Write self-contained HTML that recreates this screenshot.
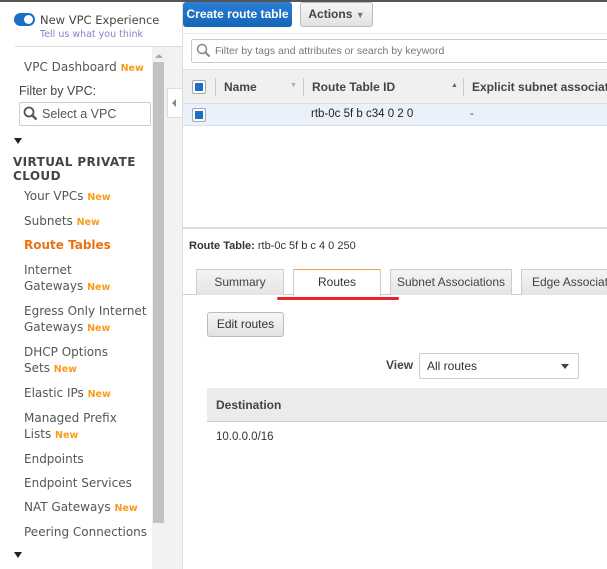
<!DOCTYPE html>
<html><head><style>
*{box-sizing:border-box;margin:0;padding:0}
body{width:607px;height:569px;overflow:hidden;background:#fff;font-family:"Liberation Sans",Arial,sans-serif;position:relative;font-size:12px;color:#333}
.a{position:absolute}
.nav{font-family:"DejaVu Sans",Verdana,sans-serif;font-size:12px;color:#555;left:24px;line-height:16px}
.new{color:#f89b1c;font-weight:bold;font-size:9.5px;font-family:"DejaVu Sans",sans-serif}
.btn{border:1px solid #bbb;border-radius:3px;background:linear-gradient(#f6f6f6,#e2e2e2);font-weight:bold;color:#444;text-align:center}
.tab{top:269px;height:26px;border:1px solid #ccc;border-bottom:none;background:linear-gradient(#f4f4f4,#e4e4e4);text-align:center;line-height:25px;color:#444;font-size:12px}
</style></head><body>
<div class="a" style="left:0;top:0;width:607px;height:2px;background:#555"></div>
<div class="a" style="left:14px;top:13px;width:21px;height:13px;border-radius:7px;background:#1a6fc9"></div>
<div class="a" style="left:24px;top:15px;width:9px;height:9px;border-radius:5px;background:#fff"></div>
<div class="a" style="left:40px;top:13px;font-family:'DejaVu Sans',sans-serif;font-size:11.5px;color:#444">New VPC Experience</div>
<div class="a" style="left:40px;top:29px;font-size:9.5px;color:#8a7fc7;font-family:'DejaVu Sans',sans-serif">Tell us what you think</div>
<div class="a" style="left:15px;top:46px;width:167px;height:1px;background:#ddd"></div>
<div class="a" style="left:152px;top:47px;width:13px;height:522px;background:#f1f1f1"></div>
<div class="a" style="left:153px;top:62px;width:11px;height:461px;background:#c1c1c1"></div>
<div class="a" style="left:155px;top:54px;width:0;height:0;border-left:4px solid transparent;border-right:4px solid transparent;border-bottom:4px solid #aaa"></div>
<div class="a" style="left:165px;top:47px;width:18px;height:522px;background:#f2f2f2"></div>
<div class="a" style="left:167px;top:88px;width:16px;height:30px;background:#fff;border:1px solid #ddd;border-right:none"></div>
<div class="a" style="left:172px;top:99px;border-top:4px solid transparent;border-bottom:4px solid transparent;border-right:4px solid #888"></div>
<div class="a nav" style="top:59px">VPC Dashboard <span class="new">New</span></div>
<div class="a" style="left:19px;top:84px;font-size:12.5px;color:#444">Filter by VPC:</div>
<div class="a" style="left:19px;top:102px;width:132px;height:24px;border:1px solid #ccc;border-radius:2px"></div>
<svg class="a" style="left:23px;top:106px" width="15" height="15"><circle cx="6" cy="6" r="4.5" fill="none" stroke="#555" stroke-width="1.8"/><line x1="9.5" y1="9.5" x2="13.5" y2="13.5" stroke="#555" stroke-width="2.4"/></svg>
<div class="a" style="left:42px;top:107px;font-size:12.5px;color:#555">Select a VPC</div>
<div class="a" style="left:14px;top:138px;border-left:4px solid transparent;border-right:4px solid transparent;border-top:6px solid #222"></div>
<div class="a" style="left:13px;top:155px;font-family:'DejaVu Sans',sans-serif;font-weight:bold;font-size:12px;color:#444;line-height:14px;letter-spacing:.4px">VIRTUAL PRIVATE<br>CLOUD</div>
<div class="a nav" style="top:188px">Your VPCs <span class="new">New</span></div>
<div class="a nav" style="top:213px">Subnets <span class="new">New</span></div>
<div class="a nav" style="top:237px;color:#ec7211;font-weight:bold">Route Tables</div>
<div class="a nav" style="top:262px">Internet<br>Gateways <span class="new">New</span></div>
<div class="a nav" style="top:303px">Egress Only Internet<br>Gateways <span class="new">New</span></div>
<div class="a nav" style="top:344px">DHCP Options<br>Sets <span class="new">New</span></div>
<div class="a nav" style="top:385px">Elastic IPs <span class="new">New</span></div>
<div class="a nav" style="top:410px">Managed Prefix<br>Lists <span class="new">New</span></div>
<div class="a nav" style="top:451px">Endpoints</div>
<div class="a nav" style="top:475px">Endpoint Services</div>
<div class="a nav" style="top:499px">NAT Gateways <span class="new">New</span></div>
<div class="a nav" style="top:524px">Peering Connections</div>
<div class="a" style="left:14px;top:552px;border-left:4px solid transparent;border-right:4px solid transparent;border-top:6px solid #222"></div>
<div class="a" style="left:182px;top:2px;width:1px;height:567px;background:#ddd"></div>
<div class="a" style="left:183px;top:2px;width:109px;height:25px;border-radius:3px;background:linear-gradient(#2b7fd3,#1566b8);color:#fff;font-weight:bold;font-size:12px;line-height:25px;text-align:center">Create route table</div>
<div class="a btn" style="left:300px;top:2px;width:73px;height:25px;line-height:23px;font-size:12px">Actions <span style="font-size:9px;color:#777">&#9660;</span></div>
<div class="a" style="left:183px;top:33px;width:424px;height:1px;background:#e8e8e8"></div>
<div class="a" style="left:191px;top:39px;width:420px;height:24px;border:1px solid #ccc;border-radius:2px;background:#fff"></div>
<svg class="a" style="left:196px;top:43px" width="15" height="15"><circle cx="6" cy="6" r="4.5" fill="none" stroke="#888" stroke-width="1.5"/><line x1="9.5" y1="9.5" x2="13.5" y2="13.5" stroke="#888" stroke-width="2"/></svg>
<div class="a" style="left:215px;top:45px;font-size:10.5px;color:#777">Filter by tags and attributes or search by keyword</div>
<div class="a" style="left:183px;top:69px;width:424px;height:35px;background:#f0f0f0;border-top:1px solid #ddd;border-bottom:1px solid #ddd"></div>
<div class="a" style="left:192px;top:80px;width:14px;height:14px;border:1px solid #aaa;border-radius:2px;background:#1a6fc9;box-shadow:inset 0 0 0 2px #fff"></div>
<div class="a" style="left:215px;top:78px;width:1px;height:18px;background:#ccc"></div>
<div class="a" style="left:224px;top:80px;font-weight:bold;font-size:12px;color:#444">Name</div>
<div class="a" style="left:290px;top:82px;font-size:7px;color:#aaa">&#9660;</div>
<div class="a" style="left:303px;top:78px;width:1px;height:18px;background:#ccc"></div>
<div class="a" style="left:312px;top:80px;font-weight:bold;font-size:12px;color:#444">Route Table ID</div>
<div class="a" style="left:451px;top:82px;font-size:7px;color:#666">&#9650;</div>
<div class="a" style="left:463px;top:78px;width:1px;height:18px;background:#ccc"></div>
<div class="a" style="left:472px;top:80px;font-weight:bold;font-size:12px;color:#444;white-space:nowrap">Explicit subnet associatio</div>
<div class="a" style="left:183px;top:104px;width:424px;height:22px;background:#eaf1fb;border-bottom:1px solid #dde"></div>
<div class="a" style="left:192px;top:108px;width:14px;height:14px;border:1px solid #aaa;border-radius:2px;background:#1a6fc9;box-shadow:inset 0 0 0 2px #fff"></div>
<div class="a" style="left:311px;top:108px;font-size:11.5px;color:#222">rtb-0c 5f b c34 0 2 0</div>
<div class="a" style="left:470px;top:108px;font-size:11px">-</div>
<div class="a" style="left:183px;top:227px;width:424px;height:2px;background:#ddd"></div>
<div class="a" style="left:189px;top:240px;font-size:11px;color:#333"><b>Route Table:</b> rtb-0c 5f b c 4 0 250</div>
<div class="a" style="left:183px;top:294px;width:424px;height:1px;background:#ccc"></div>
<div class="a tab" style="left:196px;width:88px">Summary</div>
<div class="a tab" style="left:293px;width:88px;background:#fff;border-top:1px solid #f0a040;height:27px;color:#333">Routes</div>
<div class="a tab" style="left:390px;width:122px">Subnet Associations</div>
<div class="a tab" style="left:521px;width:100px;text-align:left;padding-left:10px;white-space:nowrap">Edge Associatio</div>
<div class="a" style="left:277px;top:297px;width:122px;height:3px;border-radius:2px;background:#e8252a"></div>
<div class="a btn" style="left:207px;top:312px;width:77px;height:25px;line-height:23px;font-weight:normal;font-size:12px;color:#333">Edit routes</div>
<div class="a" style="left:386px;top:358px;font-weight:bold;font-size:12px;color:#444">View</div>
<div class="a" style="left:419px;top:353px;width:160px;height:26px;border:1px solid #ccc;border-radius:2px"></div>
<div class="a" style="left:427px;top:359px;font-size:12px;color:#333">All routes</div>
<div class="a" style="left:561px;top:364px;border-left:4px solid transparent;border-right:4px solid transparent;border-top:5px solid #444"></div>
<div class="a" style="left:207px;top:388px;width:400px;height:34px;background:#ebebeb;border-bottom:1px solid #ccc"></div>
<div class="a" style="left:216px;top:398px;font-weight:bold;font-size:12px;color:#444">Destination</div>
<div class="a" style="left:216px;top:431px;font-size:11.5px;color:#333">10.0.0.0/16</div>
</body></html>
